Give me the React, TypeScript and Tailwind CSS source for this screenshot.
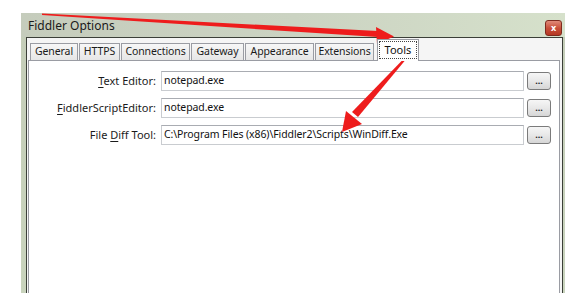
import React from 'react'

const tabs = [
  { label: 'General', w: 'w-[48px]' },
  { label: 'HTTPS', w: 'w-[41px]' },
  { label: 'Connections', w: 'w-[69px]' },
  { label: 'Gateway', w: 'w-[53px]' },
  { label: 'Appearance', w: 'w-[69px]' },
  { label: 'Extensions', w: 'w-[59px]' },
]

function Field({ label, value }: { label: React.ReactNode; value: string }) {
  return (
    <div className="flex items-center h-[20px]">
      <div className="w-[128px] pr-[1px] text-right text-[#1b1b1b] whitespace-nowrap">{label}</div>
      <div className="ml-[4px] w-[363px] h-[20px] border border-[#c9ccd0] border-t-[#a9acb2] bg-white pl-[2px] flex items-center text-[10.5px] tracking-[-0.1px] text-[#111] whitespace-nowrap">
        {value}
      </div>
      <button className="ml-[3px] w-[24px] h-[18px] rounded-[3px] border border-[#7b7b7b] bg-gradient-to-b from-[#f6f6f6] via-[#e8e8e8] to-[#d6d6d6] flex items-center justify-center text-[9px] font-bold leading-none text-[#222] pb-[2px]">
        ...
      </button>
    </div>
  )
}

export default function App() {
  return (
    <div className="relative w-[565px] h-[293px] bg-white overflow-hidden font-['Noto_Sans',sans-serif] text-[11px]">
      {/* window */}
      <div className="ml-[21px] mt-[13px] w-[546px] h-[290px] flex flex-col bg-gradient-to-b from-[#c4cdb8] to-[#c9d4bd]">
        <div className="h-[24px] flex items-center justify-between pl-[7px] pr-[5px] bg-gradient-to-r from-[#c5ccbc] via-[#cbd3c2] to-[#d6e1cb]">
          <span className="text-[12px] text-[#1a1a1a] leading-none pt-[1px]">Fiddler Options</span>
          <div className="mt-[5px] w-[17px] h-[16px] rounded-[3px] border border-[#7e2b1f] bg-gradient-to-b from-[#e08a78] via-[#c9503b] to-[#b53823] flex items-center justify-center text-white text-[9px] font-bold leading-none">
            x
          </div>
        </div>

        {/* client area */}
        <div className="ml-[5px] mr-[4px] flex-1 flex flex-col border-l border-t border-r border-[#3b3f38] bg-[#f5f5f5] pl-[1px] pr-[2px]">
          <div className="h-[22px] flex items-end pl-[2px] gap-[1px]">
            {tabs.map((t) => (
              <div
                key={t.label}
                className={`${t.w} h-[18px] -mb-[1px] border border-[#9a9ca3] bg-gradient-to-b from-[#f7f7f7] to-[#e6e6e6] flex items-center justify-center text-[10.5px] tracking-[-0.1px] text-[#1b1b1b] whitespace-nowrap`}
              >
                {t.label}
              </div>
            ))}
            <div className="ml-[2px] w-[42px] h-[22px] -mb-[1px] border border-b-0 border-[#9a9ca3] bg-white relative z-10 p-[2px] pb-[3px]">
              <div className="w-full h-full outline-1 outline-dotted outline-[#444] flex items-start justify-center text-[11px] leading-none pt-[2px] text-[#111]">
                Tools
              </div>
            </div>
          </div>

          <div className="flex-1 border border-[#9a9ca3] bg-white pt-[10px] flex flex-col gap-[7px]">
            <Field
              label={
                <>
                  <span className="underline underline-offset-2">T</span>ext Editor:
                </>
              }
              value="notepad.exe"
            />
            <Field
              label={
                <>
                  <span className="underline underline-offset-2">F</span>iddlerScriptEditor:
                </>
              }
              value="notepad.exe"
            />
            <Field
              label={
                <>
                  File <span className="underline underline-offset-2">D</span>iff Tool:
                </>
              }
              value="C:\Program Files (x86)\Fiddler2\Scripts\WinDiff.Exe"
            />
          </div>
        </div>
      </div>

      {/* red annotation arrows */}
      <svg className="absolute inset-0 pointer-events-none" width="565" height="293" viewBox="0 0 565 293">
        <polygon points="42,13.5 378,31 378,37 42,15" fill="#ee1c1c" />
        <polygon points="376,27 394,36.5 377,44" fill="#ee1c1c" />
        <polygon points="403.5,59 405,60.5 358,117 352,112" fill="#ee1c1c" />
        <polygon points="346,111 362,124 342,132" fill="#ee1c1c" />
      </svg>
    </div>
  )
}
